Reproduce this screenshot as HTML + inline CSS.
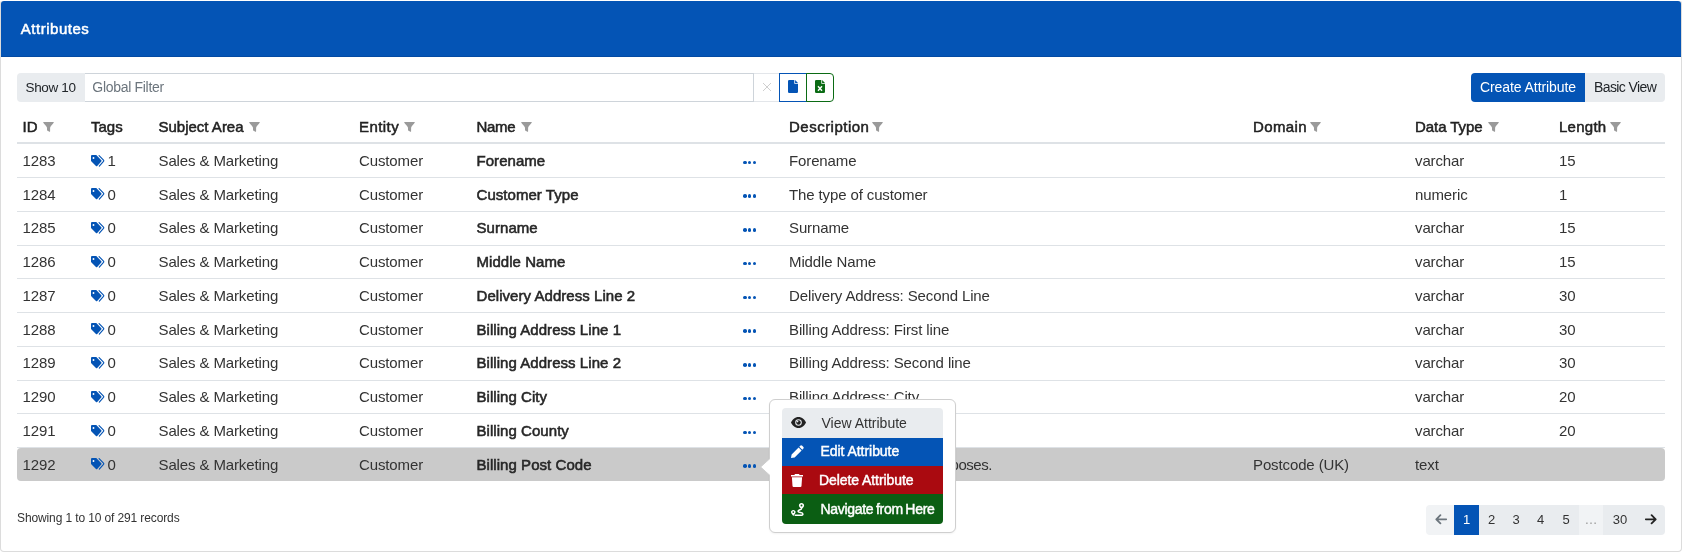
<!DOCTYPE html>
<html><head><meta charset="utf-8"><style>
*{box-sizing:border-box;margin:0;padding:0}
html,body{width:1683px;height:552px;overflow:hidden;background:#fff;font-family:"Liberation Sans", sans-serif;-webkit-font-smoothing:antialiased}
.a{position:absolute;white-space:nowrap}
svg{display:block}
.card{position:absolute;left:0;top:0;width:1682px;height:552px;border:1px solid #dcdcdc;border-top-color:#fff;border-radius:4px;background:#fff}
.hdr{position:absolute;left:1px;top:1px;width:1680px;height:56px;background:#0454b5;border-radius:3px 3px 0 0;border-bottom:1px solid #034aa3}
.th{font-size:15px;color:#222;-webkit-text-stroke:0.5px #222;letter-spacing:0px;line-height:20px}
.td{font-size:15px;color:#333;letter-spacing:-0.12px;line-height:20px}
.tb{font-size:15px;color:#272727;-webkit-text-stroke:0.55px #272727;letter-spacing:0.05px;line-height:20px}
.row{position:absolute;left:17px;width:1648px;border-bottom:1px solid #dee2e6}
.dots{position:absolute;width:3.6px;height:3.6px;border-radius:50%;background:#0454b5}
</style></head><body><div id="root" style="position:absolute;left:0;top:0;width:1683px;height:552px;will-change:transform">
<div class="card"></div>
<div class="hdr"></div>
<div class="a" style="left:20.8px;top:18.8px;font-size:15px;color:#fff;-webkit-text-stroke:0.5px #fff;line-height:20px;letter-spacing:0.52px">Attributes</div>


<div class="a" style="left:17px;top:73px;width:68px;height:29px;background:#e9ecef;border-radius:4px 0 0 4px"></div>
<div class="a" style="left:25.5px;top:78px;font-size:13.5px;color:#212529;line-height:20px;letter-spacing:-0.35px">Show 10</div>
<div class="a" style="left:85px;top:73px;width:669px;height:29px;background:#fff;border:1px solid #ced4da;border-left:none"></div>
<div class="a" style="left:92.3px;top:77.3px;font-size:14px;color:#6c757d;line-height:20px;letter-spacing:-0.3px">Global Filter</div>
<div class="a" style="left:754px;top:73px;width:25px;height:29px;background:#fff;border-top:1px solid #e3e6ea;border-bottom:1px solid #e3e6ea"></div>
<div class="a" style="left:761.5px;top:81.5px"><svg width="10" height="10" viewBox="0 0 10 10"><path d="M1 1 L9 9 M9 1 L1 9" stroke="#cfcfcf" stroke-width="1"/></svg></div>
<div class="a" style="left:779px;top:73px;width:28px;height:29px;border:1px solid #0454b5;border-right:none"></div>
<div class="a" style="left:806px;top:73px;width:28px;height:29px;border:1px solid #0b6b14;border-radius:0 4px 4px 0"></div>
<div class="a" style="left:788px;top:80px"><svg width="10" height="13" viewBox="0 0 10 13"><path d="M1.2 0 H6.3 V3.7 H10 V11.8 Q10 13 8.8 13 H1.2 Q0 13 0 11.8 V1.2 Q0 0 1.2 0 Z M7.1 0 L10 2.9 H7.1 Z" fill="#0454b5"/></svg></div>
<div class="a" style="left:815px;top:80px"><svg width="10" height="13" viewBox="0 0 10 13"><path d="M1.2 0 H6.3 V3.7 H10 V11.8 Q10 13 8.8 13 H1.2 Q0 13 0 11.8 V1.2 Q0 0 1.2 0 Z M7.1 0 L10 2.9 H7.1 Z" fill="#0b6b14"/><path d="M3 6.2 L7 10.8 M7 6.2 L3 10.8" stroke="#fff" stroke-width="1.4"/></svg></div>
<div class="a" style="left:1471px;top:73px;width:114px;height:29px;background:#0454b5;border-radius:4px 0 0 4px"></div>
<div class="a" style="left:1480px;top:77px;font-size:14px;color:#fff;line-height:20px;letter-spacing:-0.08px">Create Attribute</div>
<div class="a" style="left:1585px;top:73px;width:80px;height:29px;background:#e9ecef;border-radius:0 4px 4px 0"></div>
<div class="a" style="left:1594px;top:77px;font-size:14px;color:#212529;line-height:20px;letter-spacing:-0.6px">Basic View</div>

<div class="a th" style="left:22.5px;top:116.6px;letter-spacing:0px">ID</div>
<div class="a" style="left:43px;top:121.5px;line-height:0"><svg width="11" height="10" viewBox="0 0 11 10"><path d="M0.7 0 H10.3 Q11.1 0 10.7 0.8 C9.6 2.6 7.4 4.3 7.1 5.8 V9.2 Q7.1 10 6.4 9.7 L4.6 8.8 Q4 8.5 4 7.9 V5.8 C3.6 4.3 1.4 2.6 0.3 0.8 Q-0.1 0 0.7 0 Z" fill="#9a9a9a"/></svg></div>
<div class="a th" style="left:91px;top:116.6px;letter-spacing:0px">Tags</div>
<div class="a th" style="left:158.5px;top:116.6px;letter-spacing:0px">Subject Area</div>
<div class="a" style="left:248.5px;top:121.5px;line-height:0"><svg width="11" height="10" viewBox="0 0 11 10"><path d="M0.7 0 H10.3 Q11.1 0 10.7 0.8 C9.6 2.6 7.4 4.3 7.1 5.8 V9.2 Q7.1 10 6.4 9.7 L4.6 8.8 Q4 8.5 4 7.9 V5.8 C3.6 4.3 1.4 2.6 0.3 0.8 Q-0.1 0 0.7 0 Z" fill="#9a9a9a"/></svg></div>
<div class="a th" style="left:359px;top:116.6px;letter-spacing:0.44px">Entity</div>
<div class="a" style="left:404px;top:121.5px;line-height:0"><svg width="11" height="10" viewBox="0 0 11 10"><path d="M0.7 0 H10.3 Q11.1 0 10.7 0.8 C9.6 2.6 7.4 4.3 7.1 5.8 V9.2 Q7.1 10 6.4 9.7 L4.6 8.8 Q4 8.5 4 7.9 V5.8 C3.6 4.3 1.4 2.6 0.3 0.8 Q-0.1 0 0.7 0 Z" fill="#9a9a9a"/></svg></div>
<div class="a th" style="left:476.5px;top:116.6px;letter-spacing:-0.33px">Name</div>
<div class="a" style="left:520.5px;top:121.5px;line-height:0"><svg width="11" height="10" viewBox="0 0 11 10"><path d="M0.7 0 H10.3 Q11.1 0 10.7 0.8 C9.6 2.6 7.4 4.3 7.1 5.8 V9.2 Q7.1 10 6.4 9.7 L4.6 8.8 Q4 8.5 4 7.9 V5.8 C3.6 4.3 1.4 2.6 0.3 0.8 Q-0.1 0 0.7 0 Z" fill="#9a9a9a"/></svg></div>
<div class="a th" style="left:789px;top:116.6px;letter-spacing:0.49px">Description</div>
<div class="a" style="left:872px;top:121.5px;line-height:0"><svg width="11" height="10" viewBox="0 0 11 10"><path d="M0.7 0 H10.3 Q11.1 0 10.7 0.8 C9.6 2.6 7.4 4.3 7.1 5.8 V9.2 Q7.1 10 6.4 9.7 L4.6 8.8 Q4 8.5 4 7.9 V5.8 C3.6 4.3 1.4 2.6 0.3 0.8 Q-0.1 0 0.7 0 Z" fill="#9a9a9a"/></svg></div>
<div class="a th" style="left:1253px;top:116.6px;letter-spacing:0.36px">Domain</div>
<div class="a" style="left:1310px;top:121.5px;line-height:0"><svg width="11" height="10" viewBox="0 0 11 10"><path d="M0.7 0 H10.3 Q11.1 0 10.7 0.8 C9.6 2.6 7.4 4.3 7.1 5.8 V9.2 Q7.1 10 6.4 9.7 L4.6 8.8 Q4 8.5 4 7.9 V5.8 C3.6 4.3 1.4 2.6 0.3 0.8 Q-0.1 0 0.7 0 Z" fill="#9a9a9a"/></svg></div>
<div class="a th" style="left:1415px;top:116.6px;letter-spacing:-0.05px">Data Type</div>
<div class="a" style="left:1487.5px;top:121.5px;line-height:0"><svg width="11" height="10" viewBox="0 0 11 10"><path d="M0.7 0 H10.3 Q11.1 0 10.7 0.8 C9.6 2.6 7.4 4.3 7.1 5.8 V9.2 Q7.1 10 6.4 9.7 L4.6 8.8 Q4 8.5 4 7.9 V5.8 C3.6 4.3 1.4 2.6 0.3 0.8 Q-0.1 0 0.7 0 Z" fill="#9a9a9a"/></svg></div>
<div class="a th" style="left:1559px;top:116.6px;letter-spacing:0.26px">Length</div>
<div class="a" style="left:1610px;top:121.5px;line-height:0"><svg width="11" height="10" viewBox="0 0 11 10"><path d="M0.7 0 H10.3 Q11.1 0 10.7 0.8 C9.6 2.6 7.4 4.3 7.1 5.8 V9.2 Q7.1 10 6.4 9.7 L4.6 8.8 Q4 8.5 4 7.9 V5.8 C3.6 4.3 1.4 2.6 0.3 0.8 Q-0.1 0 0.7 0 Z" fill="#9a9a9a"/></svg></div>
<div class="a" style="left:17px;top:142px;width:1648px;height:2px;background:#dee2e6"></div>
<div class="a" style="left:17px;top:177px;width:1648px;height:1px;background:#dee2e6"></div>
<div class="a td" style="left:22.5px;top:150.80px">1283</div>
<div class="a" style="left:91px;top:154.70px;line-height:0"><svg width="14" height="12" viewBox="0 0 14 12"><path d="M0 1 Q0 0.1 1 0.1 H5.3 L10.3 5.2 Q10.9 5.8 10.3 6.4 L6.2 10.9 Q5.6 11.5 5 10.9 L0 6 Z" fill="#0454b5"/><circle cx="2.5" cy="3.0" r="0.95" fill="#fff"/><path d="M8.1 0.7 L12.5 5.2 Q13 5.8 12.5 6.4 L8.3 11.1" fill="none" stroke="#0454b5" stroke-width="1.15" stroke-linecap="round"/></svg></div>
<div class="a td" style="left:107.5px;top:150.80px">1</div>
<div class="a td" style="left:158.5px;top:150.80px">Sales &amp; Marketing</div>
<div class="a td" style="left:359px;top:150.80px">Customer</div>
<div class="a tb" style="left:476.5px;top:150.80px">Forename</div>
<div class="dots" style="left:743.00px;top:160.60px"></div>
<div class="dots" style="left:747.75px;top:160.60px"></div>
<div class="dots" style="left:752.50px;top:160.60px"></div>
<div class="a td" style="left:789px;top:150.80px">Forename</div>
<div class="a td" style="left:1415px;top:150.80px">varchar</div>
<div class="a td" style="left:1559px;top:150.80px">15</div>
<div class="a" style="left:17px;top:211px;width:1648px;height:1px;background:#dee2e6"></div>
<div class="a td" style="left:22.5px;top:184.55px">1284</div>
<div class="a" style="left:91px;top:188.45px;line-height:0"><svg width="14" height="12" viewBox="0 0 14 12"><path d="M0 1 Q0 0.1 1 0.1 H5.3 L10.3 5.2 Q10.9 5.8 10.3 6.4 L6.2 10.9 Q5.6 11.5 5 10.9 L0 6 Z" fill="#0454b5"/><circle cx="2.5" cy="3.0" r="0.95" fill="#fff"/><path d="M8.1 0.7 L12.5 5.2 Q13 5.8 12.5 6.4 L8.3 11.1" fill="none" stroke="#0454b5" stroke-width="1.15" stroke-linecap="round"/></svg></div>
<div class="a td" style="left:107.5px;top:184.55px">0</div>
<div class="a td" style="left:158.5px;top:184.55px">Sales &amp; Marketing</div>
<div class="a td" style="left:359px;top:184.55px">Customer</div>
<div class="a tb" style="left:476.5px;top:184.55px">Customer Type</div>
<div class="dots" style="left:743.00px;top:194.35px"></div>
<div class="dots" style="left:747.75px;top:194.35px"></div>
<div class="dots" style="left:752.50px;top:194.35px"></div>
<div class="a td" style="left:789px;top:184.55px">The type of customer</div>
<div class="a td" style="left:1415px;top:184.55px">numeric</div>
<div class="a td" style="left:1559px;top:184.55px">1</div>
<div class="a" style="left:17px;top:245px;width:1648px;height:1px;background:#dee2e6"></div>
<div class="a td" style="left:22.5px;top:218.30px">1285</div>
<div class="a" style="left:91px;top:222.20px;line-height:0"><svg width="14" height="12" viewBox="0 0 14 12"><path d="M0 1 Q0 0.1 1 0.1 H5.3 L10.3 5.2 Q10.9 5.8 10.3 6.4 L6.2 10.9 Q5.6 11.5 5 10.9 L0 6 Z" fill="#0454b5"/><circle cx="2.5" cy="3.0" r="0.95" fill="#fff"/><path d="M8.1 0.7 L12.5 5.2 Q13 5.8 12.5 6.4 L8.3 11.1" fill="none" stroke="#0454b5" stroke-width="1.15" stroke-linecap="round"/></svg></div>
<div class="a td" style="left:107.5px;top:218.30px">0</div>
<div class="a td" style="left:158.5px;top:218.30px">Sales &amp; Marketing</div>
<div class="a td" style="left:359px;top:218.30px">Customer</div>
<div class="a tb" style="left:476.5px;top:218.30px">Surname</div>
<div class="dots" style="left:743.00px;top:228.10px"></div>
<div class="dots" style="left:747.75px;top:228.10px"></div>
<div class="dots" style="left:752.50px;top:228.10px"></div>
<div class="a td" style="left:789px;top:218.30px">Surname</div>
<div class="a td" style="left:1415px;top:218.30px">varchar</div>
<div class="a td" style="left:1559px;top:218.30px">15</div>
<div class="a" style="left:17px;top:278px;width:1648px;height:1px;background:#dee2e6"></div>
<div class="a td" style="left:22.5px;top:252.05px">1286</div>
<div class="a" style="left:91px;top:255.95px;line-height:0"><svg width="14" height="12" viewBox="0 0 14 12"><path d="M0 1 Q0 0.1 1 0.1 H5.3 L10.3 5.2 Q10.9 5.8 10.3 6.4 L6.2 10.9 Q5.6 11.5 5 10.9 L0 6 Z" fill="#0454b5"/><circle cx="2.5" cy="3.0" r="0.95" fill="#fff"/><path d="M8.1 0.7 L12.5 5.2 Q13 5.8 12.5 6.4 L8.3 11.1" fill="none" stroke="#0454b5" stroke-width="1.15" stroke-linecap="round"/></svg></div>
<div class="a td" style="left:107.5px;top:252.05px">0</div>
<div class="a td" style="left:158.5px;top:252.05px">Sales &amp; Marketing</div>
<div class="a td" style="left:359px;top:252.05px">Customer</div>
<div class="a tb" style="left:476.5px;top:252.05px">Middle Name</div>
<div class="dots" style="left:743.00px;top:261.85px"></div>
<div class="dots" style="left:747.75px;top:261.85px"></div>
<div class="dots" style="left:752.50px;top:261.85px"></div>
<div class="a td" style="left:789px;top:252.05px">Middle Name</div>
<div class="a td" style="left:1415px;top:252.05px">varchar</div>
<div class="a td" style="left:1559px;top:252.05px">15</div>
<div class="a" style="left:17px;top:312px;width:1648px;height:1px;background:#dee2e6"></div>
<div class="a td" style="left:22.5px;top:285.80px">1287</div>
<div class="a" style="left:91px;top:289.70px;line-height:0"><svg width="14" height="12" viewBox="0 0 14 12"><path d="M0 1 Q0 0.1 1 0.1 H5.3 L10.3 5.2 Q10.9 5.8 10.3 6.4 L6.2 10.9 Q5.6 11.5 5 10.9 L0 6 Z" fill="#0454b5"/><circle cx="2.5" cy="3.0" r="0.95" fill="#fff"/><path d="M8.1 0.7 L12.5 5.2 Q13 5.8 12.5 6.4 L8.3 11.1" fill="none" stroke="#0454b5" stroke-width="1.15" stroke-linecap="round"/></svg></div>
<div class="a td" style="left:107.5px;top:285.80px">0</div>
<div class="a td" style="left:158.5px;top:285.80px">Sales &amp; Marketing</div>
<div class="a td" style="left:359px;top:285.80px">Customer</div>
<div class="a tb" style="left:476.5px;top:285.80px">Delivery Address Line 2</div>
<div class="dots" style="left:743.00px;top:295.60px"></div>
<div class="dots" style="left:747.75px;top:295.60px"></div>
<div class="dots" style="left:752.50px;top:295.60px"></div>
<div class="a td" style="left:789px;top:285.80px">Delivery Address: Second Line</div>
<div class="a td" style="left:1415px;top:285.80px">varchar</div>
<div class="a td" style="left:1559px;top:285.80px">30</div>
<div class="a" style="left:17px;top:346px;width:1648px;height:1px;background:#dee2e6"></div>
<div class="a td" style="left:22.5px;top:319.55px">1288</div>
<div class="a" style="left:91px;top:323.45px;line-height:0"><svg width="14" height="12" viewBox="0 0 14 12"><path d="M0 1 Q0 0.1 1 0.1 H5.3 L10.3 5.2 Q10.9 5.8 10.3 6.4 L6.2 10.9 Q5.6 11.5 5 10.9 L0 6 Z" fill="#0454b5"/><circle cx="2.5" cy="3.0" r="0.95" fill="#fff"/><path d="M8.1 0.7 L12.5 5.2 Q13 5.8 12.5 6.4 L8.3 11.1" fill="none" stroke="#0454b5" stroke-width="1.15" stroke-linecap="round"/></svg></div>
<div class="a td" style="left:107.5px;top:319.55px">0</div>
<div class="a td" style="left:158.5px;top:319.55px">Sales &amp; Marketing</div>
<div class="a td" style="left:359px;top:319.55px">Customer</div>
<div class="a tb" style="left:476.5px;top:319.55px">Billing Address Line 1</div>
<div class="dots" style="left:743.00px;top:329.35px"></div>
<div class="dots" style="left:747.75px;top:329.35px"></div>
<div class="dots" style="left:752.50px;top:329.35px"></div>
<div class="a td" style="left:789px;top:319.55px">Billing Address: First line</div>
<div class="a td" style="left:1415px;top:319.55px">varchar</div>
<div class="a td" style="left:1559px;top:319.55px">30</div>
<div class="a" style="left:17px;top:380px;width:1648px;height:1px;background:#dee2e6"></div>
<div class="a td" style="left:22.5px;top:353.30px">1289</div>
<div class="a" style="left:91px;top:357.20px;line-height:0"><svg width="14" height="12" viewBox="0 0 14 12"><path d="M0 1 Q0 0.1 1 0.1 H5.3 L10.3 5.2 Q10.9 5.8 10.3 6.4 L6.2 10.9 Q5.6 11.5 5 10.9 L0 6 Z" fill="#0454b5"/><circle cx="2.5" cy="3.0" r="0.95" fill="#fff"/><path d="M8.1 0.7 L12.5 5.2 Q13 5.8 12.5 6.4 L8.3 11.1" fill="none" stroke="#0454b5" stroke-width="1.15" stroke-linecap="round"/></svg></div>
<div class="a td" style="left:107.5px;top:353.30px">0</div>
<div class="a td" style="left:158.5px;top:353.30px">Sales &amp; Marketing</div>
<div class="a td" style="left:359px;top:353.30px">Customer</div>
<div class="a tb" style="left:476.5px;top:353.30px">Billing Address Line 2</div>
<div class="dots" style="left:743.00px;top:363.10px"></div>
<div class="dots" style="left:747.75px;top:363.10px"></div>
<div class="dots" style="left:752.50px;top:363.10px"></div>
<div class="a td" style="left:789px;top:353.30px">Billing Address: Second line</div>
<div class="a td" style="left:1415px;top:353.30px">varchar</div>
<div class="a td" style="left:1559px;top:353.30px">30</div>
<div class="a" style="left:17px;top:413px;width:1648px;height:1px;background:#dee2e6"></div>
<div class="a td" style="left:22.5px;top:387.05px">1290</div>
<div class="a" style="left:91px;top:390.95px;line-height:0"><svg width="14" height="12" viewBox="0 0 14 12"><path d="M0 1 Q0 0.1 1 0.1 H5.3 L10.3 5.2 Q10.9 5.8 10.3 6.4 L6.2 10.9 Q5.6 11.5 5 10.9 L0 6 Z" fill="#0454b5"/><circle cx="2.5" cy="3.0" r="0.95" fill="#fff"/><path d="M8.1 0.7 L12.5 5.2 Q13 5.8 12.5 6.4 L8.3 11.1" fill="none" stroke="#0454b5" stroke-width="1.15" stroke-linecap="round"/></svg></div>
<div class="a td" style="left:107.5px;top:387.05px">0</div>
<div class="a td" style="left:158.5px;top:387.05px">Sales &amp; Marketing</div>
<div class="a td" style="left:359px;top:387.05px">Customer</div>
<div class="a tb" style="left:476.5px;top:387.05px">Billing City</div>
<div class="dots" style="left:743.00px;top:396.85px"></div>
<div class="dots" style="left:747.75px;top:396.85px"></div>
<div class="dots" style="left:752.50px;top:396.85px"></div>
<div class="a td" style="left:789px;top:387.05px">Billing Address: City</div>
<div class="a td" style="left:1415px;top:387.05px">varchar</div>
<div class="a td" style="left:1559px;top:387.05px">20</div>
<div class="a" style="left:17px;top:447px;width:1648px;height:1px;background:#dee2e6"></div>
<div class="a td" style="left:22.5px;top:420.80px">1291</div>
<div class="a" style="left:91px;top:424.70px;line-height:0"><svg width="14" height="12" viewBox="0 0 14 12"><path d="M0 1 Q0 0.1 1 0.1 H5.3 L10.3 5.2 Q10.9 5.8 10.3 6.4 L6.2 10.9 Q5.6 11.5 5 10.9 L0 6 Z" fill="#0454b5"/><circle cx="2.5" cy="3.0" r="0.95" fill="#fff"/><path d="M8.1 0.7 L12.5 5.2 Q13 5.8 12.5 6.4 L8.3 11.1" fill="none" stroke="#0454b5" stroke-width="1.15" stroke-linecap="round"/></svg></div>
<div class="a td" style="left:107.5px;top:420.80px">0</div>
<div class="a td" style="left:158.5px;top:420.80px">Sales &amp; Marketing</div>
<div class="a td" style="left:359px;top:420.80px">Customer</div>
<div class="a tb" style="left:476.5px;top:420.80px">Billing County</div>
<div class="dots" style="left:743.00px;top:430.60px"></div>
<div class="dots" style="left:747.75px;top:430.60px"></div>
<div class="dots" style="left:752.50px;top:430.60px"></div>
<div class="a td" style="left:789px;top:420.80px">Billing Address: County</div>
<div class="a td" style="left:1415px;top:420.80px">varchar</div>
<div class="a td" style="left:1559px;top:420.80px">20</div>
<div class="a" style="left:17px;top:448.10px;width:1648px;height:33px;background:#cacaca;border-radius:4px"></div>
<div class="a td" style="left:22.5px;top:454.55px">1292</div>
<div class="a" style="left:91px;top:458.45px;line-height:0"><svg width="14" height="12" viewBox="0 0 14 12"><path d="M0 1 Q0 0.1 1 0.1 H5.3 L10.3 5.2 Q10.9 5.8 10.3 6.4 L6.2 10.9 Q5.6 11.5 5 10.9 L0 6 Z" fill="#0454b5"/><circle cx="2.5" cy="3.0" r="0.95" fill="#fff"/><path d="M8.1 0.7 L12.5 5.2 Q13 5.8 12.5 6.4 L8.3 11.1" fill="none" stroke="#0454b5" stroke-width="1.15" stroke-linecap="round"/></svg></div>
<div class="a td" style="left:107.5px;top:454.55px">0</div>
<div class="a td" style="left:158.5px;top:454.55px">Sales &amp; Marketing</div>
<div class="a td" style="left:359px;top:454.55px">Customer</div>
<div class="a tb" style="left:476.5px;top:454.55px">Billing Post Code</div>
<div class="dots" style="left:743.00px;top:464.35px"></div>
<div class="dots" style="left:747.75px;top:464.35px"></div>
<div class="dots" style="left:752.50px;top:464.35px"></div>
<div class="a td" style="right:691px;top:454.55px;letter-spacing:-0.45px">Postcode for billing purposes.</div>
<div class="a td" style="left:1253px;top:454.55px">Postcode (UK)</div>
<div class="a td" style="left:1415px;top:454.55px">text</div>
<div class="a" style="left:17px;top:509px;font-size:12px;color:#333;line-height:18px;letter-spacing:-0.12px">Showing 1 to 10 of 291 records</div>
<div class="a" style="left:1426px;top:505px;width:28px;height:30px;background:#f1f3f5;border-radius:4px 0 0 4px;color:#6c757d;font-size:13px;line-height:29px;text-align:center"></div>
<div class="a" style="left:1454px;top:505px;width:25px;height:30px;background:#0454b5;color:#fff;font-size:13px;line-height:29px;text-align:center">1</div>
<div class="a" style="left:1479px;top:505px;width:25px;height:30px;background:#e9ecef;color:#333;font-size:13px;line-height:29px;text-align:center">2</div>
<div class="a" style="left:1504px;top:505px;width:24px;height:30px;background:#e9ecef;color:#333;font-size:13px;line-height:29px;text-align:center">3</div>
<div class="a" style="left:1528px;top:505px;width:25px;height:30px;background:#e9ecef;color:#333;font-size:13px;line-height:29px;text-align:center">4</div>
<div class="a" style="left:1553px;top:505px;width:26px;height:30px;background:#e9ecef;color:#333;font-size:13px;line-height:29px;text-align:center">5</div>
<div class="a" style="left:1579px;top:505px;width:24px;height:30px;background:#f1f3f5;color:#999;font-size:13px;line-height:29px;text-align:center">&#8230;</div>
<div class="a" style="left:1603px;top:505px;width:34px;height:30px;background:#e9ecef;color:#333;font-size:13px;line-height:29px;text-align:center">30</div>
<div class="a" style="left:1637px;top:505px;width:28px;height:30px;background:#e9ecef;border-radius:0 4px 4px 0;color:#222;font-size:13px;line-height:29px;text-align:center"></div>
<div class="a" style="left:1434.5px;top:513.5px"><svg width="12" height="11" viewBox="0 0 12 11"><path d="M11.2 5.3 H1.4 M5.4 1.2 L1.3 5.3 L5.4 9.4" fill="none" stroke="#6c757d" stroke-width="1.8" stroke-linecap="round" stroke-linejoin="round"/></svg></div>
<div class="a" style="left:1644.5px;top:513.5px"><svg width="12" height="11" viewBox="0 0 12 11"><path d="M0.8 5.3 H10.6 M6.6 1.2 L10.7 5.3 L6.6 9.4" fill="none" stroke="#222" stroke-width="1.8" stroke-linecap="round" stroke-linejoin="round"/></svg></div>

<div class="a" style="left:769px;top:399px;width:186.5px;height:133.5px;background:#fff;border:1px solid #cfcfcf;border-radius:6px;box-shadow:0 1px 2px rgba(0,0,0,0.05)"></div>
<div class="a" style="left:760px;top:457.5px;line-height:0"><svg width="11" height="18" viewBox="0 0 11 18"><path d="M10.5 0 L0.6 9 L10.5 18" fill="#fff" stroke="#cfcfcf" stroke-width="1"/></svg></div>
<div class="a" style="left:770px;top:457px;width:2px;height:19px;background:#fff"></div>
<div class="a" style="left:782px;top:408px;width:161px;height:29.5px;background:#e9ecef;border-radius:4px 4px 0 0"></div>
<div class="a" style="left:782px;top:437.5px;width:161px;height:28.5px;background:#0454b5"></div>
<div class="a" style="left:782px;top:466px;width:161px;height:28px;background:#aa0a10"></div>
<div class="a" style="left:782px;top:494px;width:161px;height:29.5px;background:#0b5e13;border-radius:0 0 4px 4px"></div>
<div class="a" style="left:791px;top:417px;line-height:0"><svg width="15" height="11" viewBox="0 0 15 11"><path d="M7.5 0 C11 0 13.8 2.6 15 5.5 C13.8 8.4 11 11 7.5 11 C4 11 1.2 8.4 0 5.5 C1.2 2.6 4 0 7.5 0 Z" fill="#222"/><circle cx="7.5" cy="5.5" r="3.3" fill="#e9ecef"/><circle cx="7.5" cy="5.5" r="2.2" fill="#222"/><circle cx="6.6" cy="4.6" r="0.8" fill="#e9ecef"/></svg></div>
<div class="a" style="left:791px;top:445px;line-height:0"><svg width="13" height="13" viewBox="0 0 13 13"><path d="M9.2 0.8 Q10.2 -0.2 11.2 0.8 L12.2 1.8 Q13.2 2.8 12.2 3.8 L11.3 4.7 L8.3 1.7 Z M7.6 2.4 L10.6 5.4 L3.6 12.4 L0 13 L0.6 9.4 Z" fill="#fff"/></svg></div>
<div class="a" style="left:791px;top:474px;line-height:0"><svg width="12" height="13" viewBox="0 0 12 13"><path d="M4 0 H8 L8.6 1 H12 V2.4 H0 V1 H3.4 Z M0.9 3.3 H11.1 L10.5 12 Q10.4 13 9.4 13 H2.6 Q1.6 13 1.5 12 Z" fill="#fff"/></svg></div>
<div class="a" style="left:791px;top:503px;line-height:0"><svg width="14" height="14" viewBox="0 0 14 14"><path d="M10.5 0 C12 0 13.1 1.1 13.1 2.5 C13.1 3.9 11.5 5.4 10.5 6.4 C9.5 5.4 7.9 3.9 7.9 2.5 C7.9 1.1 9 0 10.5 0 Z" fill="#fff"/><circle cx="10.5" cy="2.5" r="0.95" fill="#0b5e13"/><path d="M10.2 6.2 C9.4 6.9 7 6.9 7 8.3 C7 9.8 11.9 9.3 11.9 10.9 C11.9 12.1 10.6 12.2 9.8 12.2 H4.2" fill="none" stroke="#fff" stroke-width="1.5" stroke-linecap="round"/><path d="M2.3 6.9 C3.6 6.9 4.6 7.9 4.6 9.1 C4.6 10.3 3.2 11.8 2.3 12.9 C1.4 11.8 0 10.3 0 9.1 C0 7.9 1 6.9 2.3 6.9 Z" fill="#fff"/><circle cx="2.3" cy="9.1" r="0.85" fill="#0b5e13"/></svg></div>
<div class="a" style="left:821.5px;top:412.5px;font-size:14px;color:#333;line-height:20px;letter-spacing:0px">View Attribute</div>
<div class="a" style="left:820.5px;top:441px;font-size:14px;color:#fff;-webkit-text-stroke:0.45px #fff;line-height:20px;letter-spacing:-0.05px">Edit Attribute</div>
<div class="a" style="left:819px;top:470px;font-size:14px;color:#fff;-webkit-text-stroke:0.45px #fff;line-height:20px;letter-spacing:-0.08px">Delete Attribute</div>
<div class="a" style="left:820.5px;top:498.5px;font-size:14px;color:#fff;-webkit-text-stroke:0.45px #fff;line-height:20px;letter-spacing:-0.3px;word-spacing:-1px">Navigate from Here</div>

</div></body></html>
